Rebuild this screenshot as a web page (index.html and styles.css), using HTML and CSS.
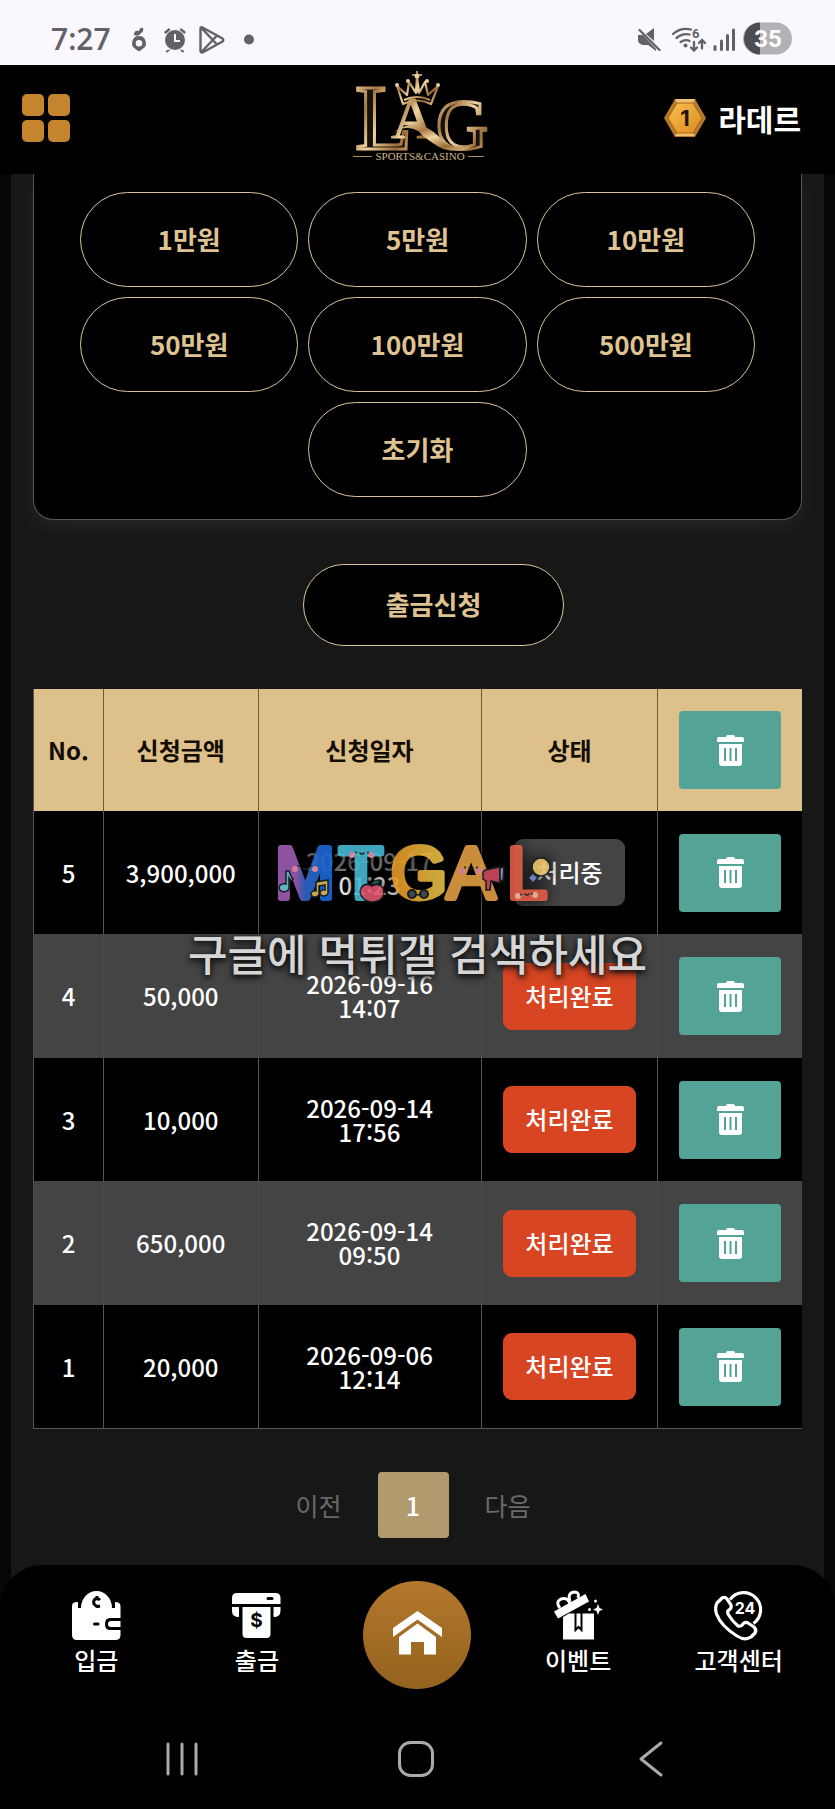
FILE: index.html
```html
<!DOCTYPE html>
<html lang="ko">
<head>
<meta charset="utf-8">
<meta name="viewport" content="width=device-width, initial-scale=1">
<title>LAG Sports &amp; Casino</title>
<link rel="stylesheet" href="styles.css">
</head>
<body>
<svg class="defs" width="0" height="0" aria-hidden="true">
  <defs>
    <linearGradient id="gold" x1="0" y1="0" x2="1" y2="1">
      <stop offset="0" stop-color="#f3dcae"/><stop offset=".3" stop-color="#a87a45"/><stop offset=".5" stop-color="#f0d5a0"/><stop offset=".75" stop-color="#9a6d38"/><stop offset="1" stop-color="#e9c98f"/>
    </linearGradient>
    <linearGradient id="hex" x1="0" y1="0" x2="1" y2="1">
      <stop offset="0" stop-color="#f6c04c"/><stop offset="1" stop-color="#dd8a24"/>
    </linearGradient>
    <linearGradient id="letter-m" x1="0" y1="0" x2="1" y2="0">
      <stop offset=".35" stop-color="#9a5aae"/><stop offset=".5" stop-color="#2d63c4"/><stop offset="1" stop-color="#1267d6"/>
    </linearGradient>
    <linearGradient id="letter-g" x1="0" y1="0" x2="1" y2="0">
      <stop offset="0" stop-color="#df9022"/><stop offset="1" stop-color="#dfbd45"/>
    </linearGradient>
    <symbol id="trash" viewBox="0 0 27 31">
      <path fill="#fff" d="M9 2Q9 0 11 0h5q2 0 2 2h7q2 0 2 2v3H0V4q0-2 2-2zM2 9h23v19q0 3-3 3H5q-3 0-3-3z"/>
      <path stroke="#53a397" stroke-width="2" d="M8 13v13M13.500 13v13M19 13v13"/>
    </symbol>
  </defs>
</svg>

<div class="status-bar">
  <span class="clock">7:27</span>
  <svg class="notices" viewBox="130 20 126 38" width="126" height="38" aria-hidden="true">
    <g fill="#636165">
      <path fill-rule="evenodd" d="M138 36a7 7 0 0 1 3.500 13L138 51.500 134.500 49A7 7 0 0 1 138 36zm0 4a3.300 3.300 0 1 0 0 6.600 3.300 3.300 0 0 0 0-6.600z"/>
      <path d="M133 35q0-5 5-4 1-4 4-3 1 4-2 5-2 4-7 2z"/>
      <circle cx="174" cy="40" r="10"/>
      <path d="M163 32l5-4 1.500 2-5 4zM185 32l-5-4-1.500 2 5 4zM166 50l-1.500 2 2 .5 3-3zM182 50l1.500 2-2 .5-3-3z"/>
      <circle cx="248" cy="39.500" r="5"/>
    </g>
    <g fill="none" stroke="#faf7ff" stroke-width="2"><path d="M174 34v7h5"/></g>
    <g fill="none" stroke="#636165" stroke-width="2.400" stroke-linejoin="round"><path d="M199.500 28.500q0-2 2-1l20 11q1.500 1.500 0 3l-20 11q-2 0-2-2zM200.500 28l15 16M200.500 52l15-16"/></g>
  </svg>
  <svg class="signals" viewBox="636 20 157 38" width="157" height="38" aria-hidden="true">
    <g fill="#636165">
      <path d="M638 35h5l13 14v2l-8-6h-5q-5-1-5-5zM646 34l8-6v13z"/>
      <circle cx="685.500" cy="45.500" r="2"/>
    </g>
    <g fill="none" stroke="#636165" stroke-width="2.300" stroke-linecap="round">
      <path d="M639.500 30l20 20"/>
      <path d="M673 34q8-7 18-4.500M676.500 38q6-5 13-3.500M680.500 42q5-3 9-1"/>
      <path d="M694 42v8M691 47.500l3 3 3-3M702 48.500v-8M699 43l3-3 3 3"/>
      <path stroke-width="3" d="M715 46.500v3M721.500 41v8.500M727.500 35.500v14M733.500 30v19.500"/>
    </g>
    <text class="tiny-six" x="692" y="38">6</text>
    <rect x="743" y="22.500" width="49" height="32" rx="16" fill="#b3b0b6"/>
    <path fill="#4e4c50" d="M760 22.500a16 16 0 0 0 0 32z"/>
    <text class="battery" x="768" y="47" text-anchor="middle">35</text>
  </svg>
</div>

<header class="header">
  <button class="menu" type="button" aria-label="메뉴"><i></i><i></i><i></i><i></i></button>
  <a class="logo" href="#" aria-label="LAG Sports &amp; Casino">
    <svg viewBox="345 65 145 105" width="145" height="105">
      <g class="logo-letters">
        <text x="355" y="149" font-size="94" fill="#15110d" stroke="url(#gold)" stroke-width="3">L</text>
        <text x="391" y="138" font-size="60" fill="url(#gold)" stroke="url(#gold)" stroke-width="1">A</text>
        <text x="436" y="149" font-size="72" fill="#15110d" stroke="url(#gold)" stroke-width="3">G</text>
      </g>
      <path fill="url(#gold)" d="M391 134q18-13 32-8 12 5 20 15 12 10 30 5-18 9-34 1-12-7-21-16-12-7-27 3z"/>
      <g fill="none" stroke="url(#gold)" stroke-width="2.200" stroke-linejoin="round">
        <path d="M403 104l-6-18 10 9 2-13 7 11 1-17 2 17 6-11 3 13 10-9-7 18q-14-7-28 0zM404 100q13-6 26 0M417 71v10M412 75h10"/>
      </g>
      <g fill="#e6cd9e"><circle cx="397" cy="85" r="2"/><circle cx="408" cy="81" r="2"/><circle cx="417" cy="76" r="2.500"/><circle cx="427" cy="81" r="2"/><circle cx="438" cy="85" r="2"/><circle cx="417" cy="90" r="2.500"/></g>
      <path stroke="#a98a5b" d="M353 156.500h19M468 156.500h16"/>
      <text class="logo-sub" x="420" y="160" text-anchor="middle">SPORTS&amp;CASINO</text>
    </svg>
  </a>
  <a class="user" href="#">
    <svg viewBox="0 0 42 38" width="42" height="38" aria-hidden="true">
      <path fill="#b57a2a" d="M11 0h20l11 19-11 19H11L0 19z"/>
      <path fill="#f0c070" d="M11 0h20l-2 4H13zM13 34h16l2 3H11z"/>
      <path fill="url(#hex)" stroke="#a8651b" d="M13 4h16l9 15-9 15H13L4 19z"/>
      <text class="level" x="21" y="27" text-anchor="middle">1</text>
    </svg>
    <span>라데르</span>
  </a>
</header>

<main class="content">
  <section class="card">
    <button class="pill" type="button">1만원</button>
    <button class="pill" type="button">5만원</button>
    <button class="pill" type="button">10만원</button>
    <button class="pill" type="button">50만원</button>
    <button class="pill" type="button">100만원</button>
    <button class="pill" type="button">500만원</button>
    <button class="pill reset" type="button">초기화</button>
  </section>

  <div class="submit-row"><button class="pill submit" type="button">출금신청</button></div>

  <div class="history">
    <table>
      <colgroup><col class="c-no"><col class="c-amount"><col class="c-date"><col class="c-state"><col class="c-del"></colgroup>
      <thead>
        <tr><th>No.</th><th>신청금액</th><th>신청일자</th><th>상태</th><th><button class="del" type="button" aria-label="전체 삭제"><svg width="27" height="31"><use href="#trash"/></svg></button></th></tr>
      </thead>
      <tbody>
        <tr><td>5</td><td>3,900,000</td><td><span class="dim">2026-09-17</span><br>01:23</td><td><span class="badge pending">처리중</span></td><td><button class="del" type="button" aria-label="삭제"><svg width="27" height="31"><use href="#trash"/></svg></button></td></tr>
        <tr><td>4</td><td>50,000</td><td>2026-09-16<br>14:07</td><td><span class="badge">처리완료</span></td><td><button class="del" type="button" aria-label="삭제"><svg width="27" height="31"><use href="#trash"/></svg></button></td></tr>
        <tr><td>3</td><td>10,000</td><td>2026-09-14<br>17:56</td><td><span class="badge">처리완료</span></td><td><button class="del" type="button" aria-label="삭제"><svg width="27" height="31"><use href="#trash"/></svg></button></td></tr>
        <tr><td>2</td><td>650,000</td><td>2026-09-14<br>09:50</td><td><span class="badge">처리완료</span></td><td><button class="del" type="button" aria-label="삭제"><svg width="27" height="31"><use href="#trash"/></svg></button></td></tr>
        <tr><td>1</td><td>20,000</td><td>2026-09-06<br>12:14</td><td><span class="badge">처리완료</span></td><td><button class="del" type="button" aria-label="삭제"><svg width="27" height="31"><use href="#trash"/></svg></button></td></tr>
      </tbody>
    </table>

    <div class="watermark">
      <svg class="mark" viewBox="0 0 296 70" width="296" height="70" role="img" aria-label="MTGAL">
        <g class="mark-letters">
          <text x="5" y="58" fill="url(#letter-m)" stroke="url(#letter-m)">M</text>
          <text x="69" y="58" fill="#45b5cf" stroke="#45b5cf">T</text>
          <text x="121" y="58" fill="url(#letter-g)" stroke="url(#letter-g)">G</text>
          <text x="177" y="58" fill="#dc9a42" stroke="#dc9a42">A</text>
          <text x="237" y="58" fill="#dc5b45" stroke="#dc5b45">L</text>
        </g>
        <g fill="#e48aa0"><circle cx="25" cy="29" r="3"/><circle cx="45" cy="29" r="3"/><circle cx="82" cy="15" r="3"/><circle cx="101" cy="15" r="3"/><circle cx="192" cy="31" r="3"/><circle cx="209" cy="31" r="3"/></g>
        <g fill="#f0b0a0"><circle cx="248" cy="56" r="3"/><circle cx="265" cy="55" r="3"/></g>
        <g fill="none" stroke="#222" stroke-width="1.500" stroke-linecap="round"><path d="M28 26h1M41 26h1M33 28q2 2 4 0M86 12v1M98 12v1M90 13q2 2 4 0M195 27v1M207 27v1M199 28q2 2 4 0M251 54v1M262 53v1M255 54q2 2 4 0M146 54q2 2 4 0"/></g>
        <g fill="#44515a" stroke="#1c1c1c" stroke-width="2"><circle cx="142" cy="54" r="4"/><circle cx="154" cy="54" r="4"/></g>
        <g stroke="#182026" stroke-width="1.500">
          <path fill="#6cc3d4" d="M19 31q2 6 4 8l-2 2-2-3v9a5 4 0 1 1-3-3V31z"/>
          <path fill="#dcb65f" d="M46 42l12-2v13a4 3 0 1 1-3-3v-5l-6 1v8a4 3 0 1 1-3-3z"/>
          <path fill="#d9546c" d="M102 46q7-4 11 2 3 7-3 12-8 4-15 0-7-6-4-12 4-6 11-2z"/>
          <path fill="#2f7d4d" d="M101 44q3-5 10-3-3 4-10 3z"/>
          <path fill="#c9485f" d="M215 30l15-3v16l-9-2-1 9h-4v-9l-3-2v-7z"/>
          <path fill="#8b8fd1" d="M230 28l4-1-1 14-3-1z"/>
          <circle cx="271" cy="27" r="9" fill="#e6c069"/>
          <path fill="#7a83c8" d="M263 33l5 5-5 5-5-5z"/>
        </g>
      </svg>
      <p>구글에 먹튀갤 검색하세요</p>
    </div>
  </div>

  <nav class="pager" aria-label="페이지">
    <a href="#">이전</a><a class="current" href="#">1</a><a href="#">다음</a>
  </nav>
</main>

<nav class="tabs" aria-label="하단 메뉴">
  <a href="#">
    <svg viewBox="0 0 49 49" width="49" height="49" aria-hidden="true">
      <path fill="#fff" d="M0 15q0-4 5-4h1v6h3a15.500 17 0 0 1 31 0h3v-6q5.500 0 5.500 4v12H38q-5 0-5 6t5 6h10.500v5q0 5-5 5H5q-5 0-5-5z"/>
      <path fill="#fff" d="M48.500 30H39q-3 0-3 3t3 3h9.500z"/>
      <path stroke="#000" stroke-width="3" stroke-linecap="round" d="M22.500 33h3.500"/>
      <path fill="none" stroke="#000" stroke-width="3" d="M28 9q-2-2-5-1-2 2-1 5 2 3 6 2M25 5v3M25 14v3"/>
    </svg>
    <span>입금</span>
  </a>
  <a href="#">
    <svg viewBox="0 0 49 49" width="49" height="49" aria-hidden="true">
      <path fill="#fff" d="M0 7q0-5 5-5h38.500q5 0 5 5v6H0zM0 16h7v10q-7 0-7-6zM41.500 16h7v4q0 6-7 6zM10.500 16h28v27q0 4-4 4h-20q-4 0-4-4z"/>
      <path stroke="#000" stroke-width="3" stroke-linecap="round" d="M36 7.500h4"/>
      <text class="dollar" x="24.500" y="36" text-anchor="middle">$</text>
    </svg>
    <span>출금</span>
  </a>
  <a class="home" href="#" aria-label="홈">
    <svg viewBox="0 0 49 44" width="49" height="44" aria-hidden="true">
      <path fill="#fff" d="M24.500 0L49 17v9L24.500 8.500 0 26v-9z"/>
      <path fill="#fff" d="M24.500 12.500L43 26v17.500H31V31H18v12.500H6V26z"/>
    </svg>
  </a>
  <a href="#">
    <svg viewBox="0 0 49 49" width="49" height="49" aria-hidden="true">
      <path fill="#fff" d="M0 20.500L31.500 3 35 10.500 4 27.500zM9 26l6-3.500h25V48.500H9z"/>
      <g fill="none" stroke="#fff" stroke-width="3"><path d="M6 17q-5-6 1-9 7-2 9 5M16 11q-3-9 4-10 6 0 4 6"/></g>
      <path fill="none" stroke="#000" stroke-width="2" d="M21.500 22v17l3-3 3 3V22"/>
      <path fill="#fff" d="M44 13l1.500 4 3.500 1.500-3.500 1.500-1.500 4-1.500-4-3.500-1.500 3.500-1.500z"/>
      <g fill="#fff"><circle cx="41.500" cy="10" r="1.500"/><circle cx="35.500" cy="18.500" r="1.500"/></g>
    </svg>
    <span>이벤트</span>
  </a>
  <a href="#">
    <svg viewBox="0 0 49 49" width="49" height="49" aria-hidden="true">
      <g fill="none" stroke="#fff" stroke-width="3.200" stroke-linejoin="round">
        <path d="M16 8.500A17 17 0 1 1 39.500 32.500"/>
        <path d="M3 12l5-5q3-1.500 5 1l4 6q1 3-2 5-2 1-1 4 4 7 10 12 3 1 5-2 2-2.500 5-1l6 4q3 3 1 6l-4 4q-6 4-14-1Q7 35 2.500 23 .5 17 3 12z"/>
      </g>
      <text class="hours" x="31" y="23" text-anchor="middle">24</text>
    </svg>
    <span>고객센터</span>
  </a>
</nav>

<div class="system-bar">
  <button type="button" aria-label="최근 앱"><svg viewBox="0 0 36 36" width="36" height="36"><path stroke="#aaa" stroke-width="3" stroke-linecap="round" d="M4 3v30M18 3v30M32 3v30"/></svg></button>
  <button type="button" aria-label="홈 화면"><svg viewBox="0 0 36 36" width="36" height="36"><rect x="1.500" y="1.500" width="33" height="33" rx="11" fill="none" stroke="#aaa" stroke-width="3"/></svg></button>
  <button type="button" aria-label="뒤로"><svg viewBox="0 0 36 36" width="36" height="36"><path fill="none" stroke="#aaa" stroke-width="3" stroke-linecap="round" stroke-linejoin="round" d="M28 2L8 18l20 16"/></svg></button>
</div>
</body>
</html>
```

FILE: styles.css
```css
* { box-sizing: border-box; }

body {
  margin: 0;
  min-height: 100vh;
  background: #060606;
  color: #fff;
  font-family: "Noto Sans CJK KR", sans-serif;
  font-size: 24px;
  line-height: 24px;
}

a { color: inherit; text-decoration: none; }
button { font: inherit; color: inherit; background: none; border: 0; padding: 0; cursor: pointer; }
svg { display: block; flex: none; overflow: visible; }
.defs { position: absolute; }

/* phone status bar */
.status-bar {
  display: flex;
  align-items: center;
  height: 65px;
  padding: 12px 42px 0 51px;
  background: #faf7ff;
}
.clock { font: 600 30px "Open Sans", sans-serif; color: #636165; }
.notices { margin-left: 20px; }
.signals { margin-left: auto; }
.tiny-six { font: 700 13px Roboto, sans-serif; fill: #636165; }
.battery { font: 700 24px Roboto, sans-serif; fill: #fff; }

/* site header */
.header {
  display: grid;
  grid-template-columns: 1fr auto 1fr;
  align-items: center;
  height: 109px;
  padding: 0 22px 4px;
  background: #000;
}
.menu { display: grid; grid-template-columns: 22px 22px; gap: 4px; justify-self: start; }
.menu i { height: 22px; border-radius: 5px; background: #c5852f; }
.logo-letters { font-family: "Liberation Serif", serif; }
.logo-sub { font: 11px "Liberation Serif", serif; fill: #cdb48a; }
.user {
  display: flex;
  align-items: center;
  justify-content: flex-end;
  gap: 12px;
  padding-right: 12px;
  font-size: 30px;
  font-weight: 700;
}
.level { font: 700 22px Inter, sans-serif; fill: #231608; }

/* amount picker */
.content { margin: 0 11px; padding: 0 22px 69px; background: #171717; }
.card {
  display: grid;
  grid-template-columns: repeat(3, 1fr);
  gap: 10px;
  padding: 18px 46px 22px;
  background: #000;
  border: 1px solid #555;
  border-top: 0;
  border-radius: 0 0 20px 20px;
  box-shadow: 0 8px 20px rgba(255, 255, 255, .06);
}
.pill {
  height: 95px;
  padding-bottom: 2px;
  border: 1px solid #dcc49c;
  border-radius: 48px;
  background: #000;
  color: #dfc392;
  font-size: 26px;
  font-weight: 700;
}
.reset { grid-column: 2; }
.submit-row { display: flex; justify-content: center; padding: 44px 0 43px 32px; }
.submit { height: 82px; padding: 0 82px 2px; }

/* history table */
.history { position: relative; }
table { width: 100%; table-layout: fixed; border-spacing: 0; border-bottom: 1px solid #555; }
.c-no { width: 9.1%; }
.c-amount { width: 20.1%; }
.c-date { width: 29%; }
.c-state { width: 23%; }
.c-del { width: 18.8%; }
th, td { padding: 0; text-align: center; vertical-align: middle; border-left: 1px solid #555; }
th { height: 122px; background: #dec08b; color: #130d04; border-color: #6d5c3c; font-weight: 700; }
td { height: 123px; background: #000; font-weight: 500; }
tbody tr:nth-child(even) td { height: 124px; background: #444; border-color: #4c4c4c; }
th:first-child, td:first-child { border-left-color: #555; }
.dim { color: #8a8a8a; }
.badge {
  display: inline-block;
  padding: 21px 22px 22px;
  border-radius: 9px;
  background: #d74523;
}
.pending { background: #444; }
.del {
  display: inline-flex;
  align-items: center;
  justify-content: center;
  width: 102px;
  height: 78px;
  border-radius: 4px;
  background: #53a397;
  vertical-align: middle;
}

.watermark {
  position: absolute;
  top: 151px;
  left: 0;
  right: 0;
  display: flex;
  flex-direction: column;
  align-items: center;
  gap: 14px;
  pointer-events: none;
}
.mark { opacity: .92; filter: drop-shadow(0 0 8px #000); }
.mark-letters { font: 72px "Liberation Sans", sans-serif; stroke-width: 6px; stroke-linejoin: round; }
.watermark p {
  margin: 0;
  color: #d6d6d6;
  font-size: 43px;
  font-weight: 500;
  line-height: 56px;
  white-space: nowrap;
  text-shadow: 0 2px 8px #000, 0 2px 4px #222;
}

/* pager */
.pager {
  display: flex;
  align-items: center;
  justify-content: center;
  gap: 36px;
  padding: 43px 9px 0 0;
  color: #6a6a6a;
  font-size: 25px;
}
.current {
  display: flex;
  align-items: center;
  justify-content: center;
  width: 71px;
  height: 66px;
  border-radius: 4px;
  background: #b19b6e;
  color: #fff;
  font-weight: 500;
}

/* bottom tabs */
.tabs {
  position: relative;
  display: grid;
  grid-template-columns: repeat(5, 1fr);
  align-items: start;
  justify-items: center;
  height: 145px;
  margin-top: -42px;
  padding: 26px 16px 0;
  background: #000;
  border-radius: 42px 42px 0 0;
}
.tabs a {
  display: flex;
  flex-direction: column;
  align-items: center;
  gap: 6px;
  font-weight: 500;
  line-height: 28px;
}
.tabs .home {
  justify-content: center;
  width: 108px;
  height: 108px;
  margin-top: -10px;
  padding-bottom: 4px;
  border-radius: 50%;
  background: linear-gradient(#b4782c, #93621f);
}
.dollar { font: 700 19px Inter, sans-serif; fill: #000; }
.hours { font: 700 16px Inter, sans-serif; fill: #fff; }

/* phone navigation */
.system-bar {
  display: grid;
  grid-template-columns: repeat(3, 1fr);
  align-items: center;
  justify-items: center;
  height: 99px;
  padding: 0 67px 2px 65px;
  background: #000;
}
```
